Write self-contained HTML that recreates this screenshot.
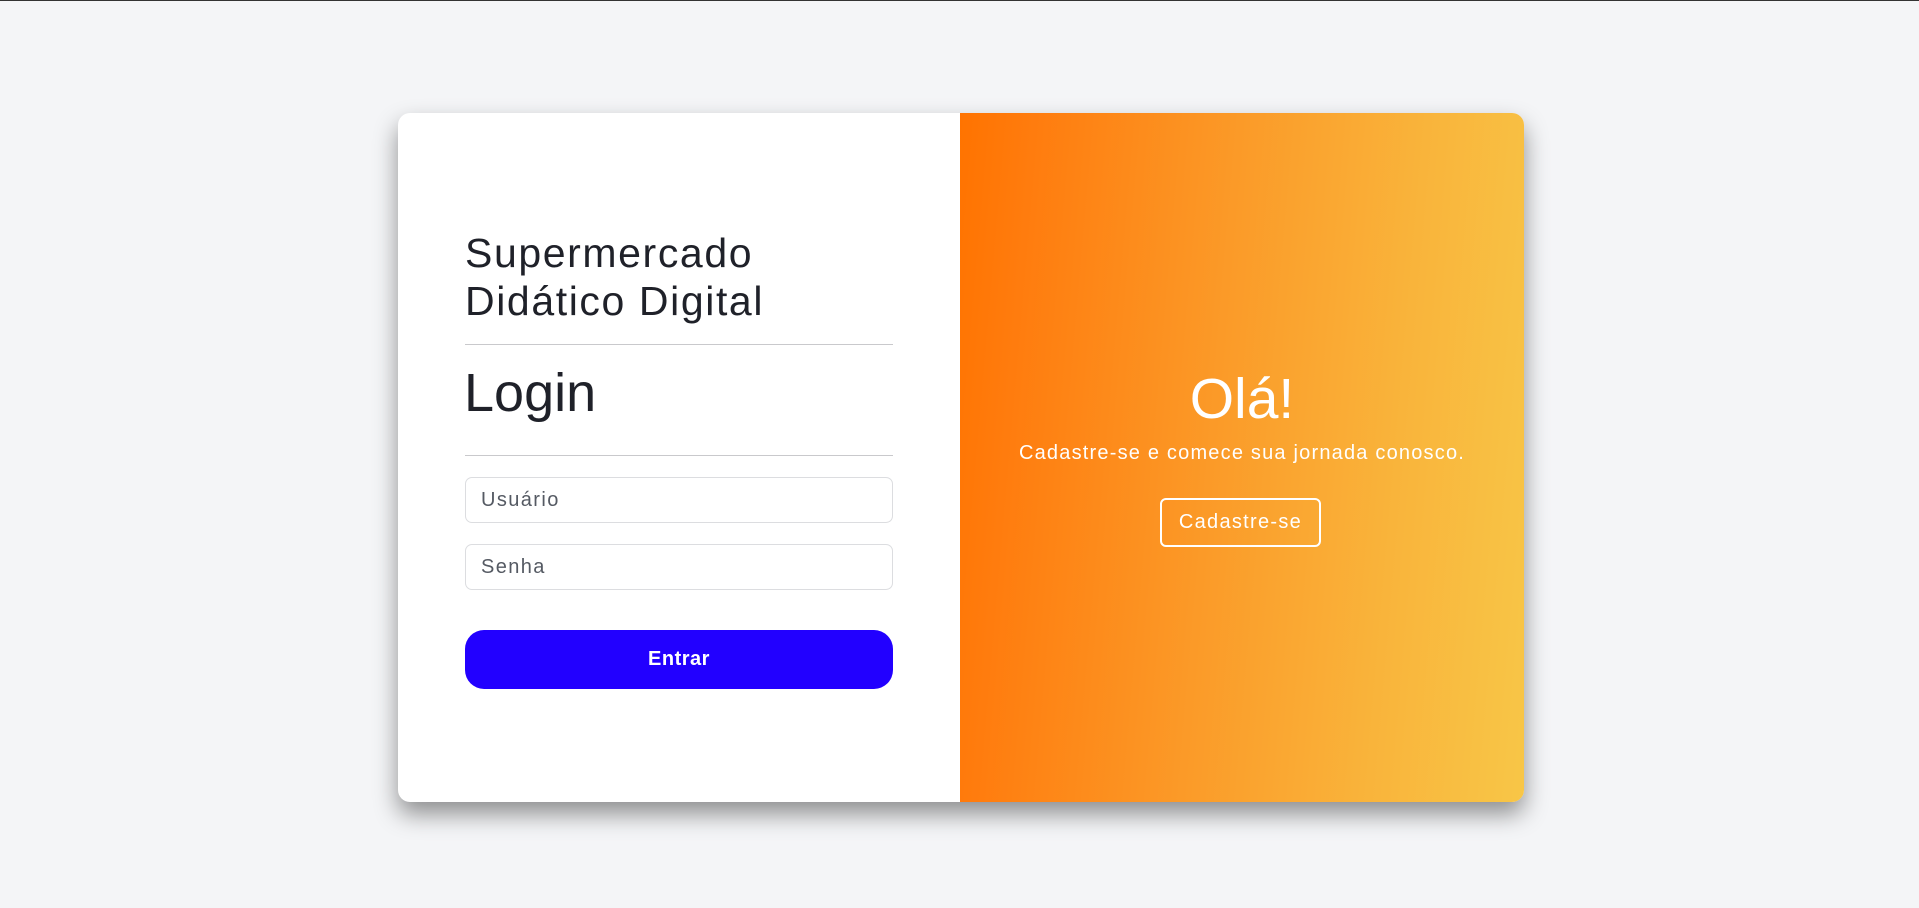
<!DOCTYPE html>
<html><head><meta charset="utf-8"><style>
html,body{margin:0;padding:0}
body{width:1919px;height:908px;background:#f4f5f7;border-top:1px solid #333;box-sizing:border-box;position:relative;overflow:hidden;font-family:"Liberation Sans",sans-serif}
.card{position:absolute;left:398px;top:112px;width:1126px;height:689px;border-radius:12px;background:#fff;box-shadow:0 12px 24px rgba(0,0,0,.42);overflow:hidden}
.right{position:absolute;left:562px;top:0;width:564px;height:689px;background:linear-gradient(95deg,#ff7300 0%,#ff7c0e 12%,#fb9a28 45%,#f9b43b 75%,#f8c647 100%);color:#fff;text-align:center}
.t{position:absolute;left:67px;top:116px;font-size:41px;line-height:48px;color:#1f2129;letter-spacing:1.6px}
.hr{position:absolute;left:67px;width:428px;height:1px;background:#c9c9cc}
.login{position:absolute;left:66px;top:247px;font-size:54px;line-height:66px;color:#1f2129}
.in{position:absolute;left:67px;width:426px;height:44px;border:1px solid #dcdde0;border-radius:7px;font-size:20px;color:#555a63;line-height:44px;letter-spacing:1.4px}
.in span{position:absolute;left:15px}
.btn{position:absolute;left:67px;top:517px;width:428px;height:59px;border-radius:19px;background:#2200ff;color:#fff;font-weight:bold;font-size:20px;text-align:center;line-height:59px;letter-spacing:.5px}
.ola{position:absolute;left:0;width:100%;top:254px;font-size:57px;line-height:64px}
.sub{position:absolute;left:0;width:100%;top:328px;font-size:20px;line-height:24px;letter-spacing:1.2px}
.cb{position:absolute;left:200px;top:385px;width:157px;height:45px;border:2px solid #fff;border-radius:6px;font-size:20px;line-height:45px;letter-spacing:1.3px}
</style></head><body>
<div class="card">
<div class="t">Supermercado<br>Didático Digital</div>
<div class="hr" style="top:231px"></div>
<div class="login">Login</div>
<div class="hr" style="top:342px"></div>
<div class="in" style="top:364px"><span>Usuário</span></div>
<div class="in" style="top:431px"><span>Senha</span></div>
<div class="btn">Entrar</div>
<div class="right">
<div class="ola">Olá!</div>
<div class="sub">Cadastre-se e comece sua jornada conosco.</div>
<div class="cb">Cadastre-se</div>
</div>
</div>
</body></html>
